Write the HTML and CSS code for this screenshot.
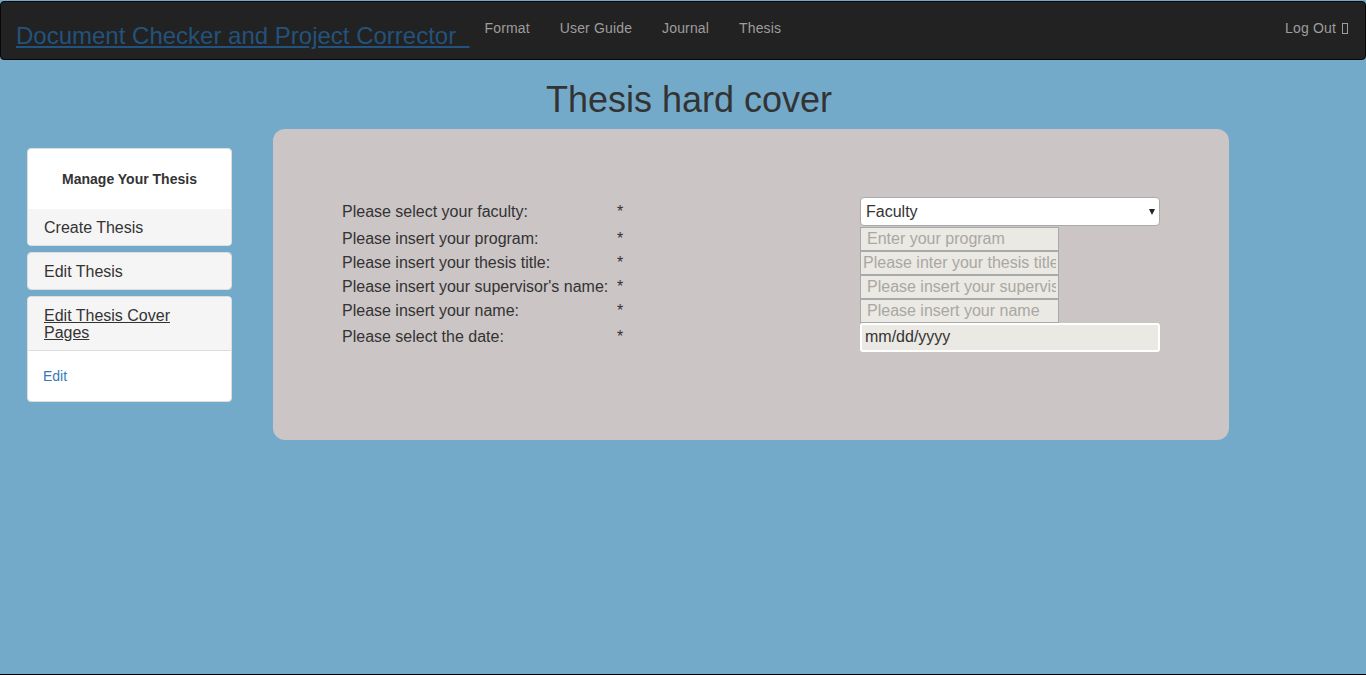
FILE: index.html
```html
<!DOCTYPE html>
<html>
<head>
<meta charset="utf-8">
<title>Thesis hard cover</title>
<link rel="stylesheet" href="styles.css">
</head>
<body>
<div class="page">
  <nav class="navbar">
    <a class="brand" href="#">Document Checker and Project Corrector&nbsp;&nbsp;</a>
    <ul class="nav">
      <li><a href="#">Format</a></li>
      <li><a href="#">User Guide</a></li>
      <li><a href="#">Journal</a></li>
      <li><a href="#">Thesis</a></li>
    </ul>
    <a class="logout" href="#">Log Out <span class="tofu"></span></a>
  </nav>

  <h1 class="title">Thesis hard cover</h1>

  <div class="content">
    <aside class="sidebar">
      <div class="panel">
        <div class="panel-top">Manage Your Thesis</div>
        <div class="panel-heading">Create Thesis</div>
      </div>
      <div class="panel">
        <div class="panel-heading">Edit Thesis</div>
      </div>
      <div class="panel">
        <div class="panel-heading bordered"><a class="uline" href="#">Edit Thesis Cover Pages</a></div>
        <div class="panel-body"><a class="link" href="#">Edit</a></div>
      </div>
    </aside>

    <main class="card">
      <form class="form">
        <label class="lbl">Please select your faculty:</label>
        <span class="req">*</span>
        <div class="field">
          <span class="select-wrap">
            <select class="select"><option>Faculty</option></select>
          </span>
        </div>

        <label class="lbl">Please insert your program:</label>
        <span class="req">*</span>
        <div class="field"><input class="txt pad" type="text" placeholder="Enter your program"></div>

        <label class="lbl">Please insert your thesis title:</label>
        <span class="req">*</span>
        <div class="field"><input class="txt" type="text" placeholder="Please inter your thesis title"></div>

        <label class="lbl">Please insert your supervisor's name:</label>
        <span class="req">*</span>
        <div class="field"><input class="txt pad" type="text" placeholder="Please insert your supervisor's name"></div>

        <label class="lbl">Please insert your name:</label>
        <span class="req">*</span>
        <div class="field"><input class="txt pad" type="text" placeholder="Please insert your name"></div>

        <label class="lbl">Please select the date:</label>
        <span class="req">*</span>
        <div class="field"><input class="date" type="text" value="mm/dd/yyyy" readonly></div>
      </form>
    </main>
  </div>
</div>
</body>
</html>
```

FILE: styles.css
```css
* { box-sizing: border-box; }

html, body {
  margin: 0;
  padding: 0;
}

body {
  background: #74aac9;
  font-family: "Liberation Sans", Arial, Helvetica, sans-serif;
  font-size: 14px;
  color: #333;
}

.page {
  min-height: 100vh;
  padding-top: 1px;
  border-bottom: 1px solid #000;
}

.navbar {
  display: flex;
  align-items: flex-start;
  height: 59px;
  background: #222;
  border: 1px solid #080808;
  border-radius: 4px;
}

.brand {
  font-size: 24px;
  line-height: 28px;
  color: #23527c;
  text-decoration: underline;
  padding: 20px 0 0 15px;
  margin-right: 1px;
}

.nav {
  display: flex;
  list-style: none;
  margin: 0;
  padding: 0;
}

.nav a,
.logout {
  display: block;
  padding: 16px 15px 14px;
  line-height: 20px;
  font-size: 14px;
  letter-spacing: 0.15px;
  color: #9d9d9d;
  text-decoration: none;
}

.nav li:first-child a {
  padding-left: 14px;
}

.logout {
  margin-left: auto;
  padding-right: 17px;
}

.tofu {
  display: inline-block;
  width: 6px;
  height: 11px;
  border: 1px solid #9d9d9d;
  vertical-align: -1px;
  margin-left: 2px;
}

.title {
  margin: 20px 0 9px;
  padding-left: 12px;
  text-align: center;
  font-size: 36px;
  font-weight: 500;
  line-height: 1.1;
  color: #333;
}

.content {
  display: flex;
  align-items: flex-start;
}

.sidebar {
  width: 205px;
  margin-left: 27px;
  margin-top: 19px;
}

.panel {
  background: #fff;
  border: 1px solid #ddd;
  border-radius: 4px;
  margin-bottom: 6px;
  overflow: hidden;
}

.panel-top {
  height: 60px;
  display: flex;
  align-items: center;
  justify-content: center;
  font-weight: bold;
  font-size: 14px;
  padding-top: 1px;
}

.panel-heading {
  background: #f5f5f5;
  padding: 10px 15px 9px 16px;
  font-size: 16px;
  line-height: 17px;
  color: #333;
}

.panel-heading.bordered {
  border-bottom: 1px solid #ddd;
}

.uline {
  color: #333;
  text-decoration: underline;
}

.panel-body {
  padding: 15px 15px 15px 15px;
  line-height: 20px;
}

.link {
  color: #337ab7;
  text-decoration: none;
  font-size: 14px;
}

.card {
  width: 956px;
  height: 311px;
  margin-left: 41px;
  background: #cbc5c5;
  border-radius: 12px;
  padding: 68px 0 0 69px;
}

.form {
  display: grid;
  grid-template-columns: 275px 243px 300px;
  align-items: center;
  font-size: 16px;
}

.lbl {
  color: #333;
  line-height: 18px;
}

.req {
  color: #333;
  line-height: 18px;
}

.field {
  display: flex;
}

.select-wrap {
  position: relative;
  display: block;
  width: 300px;
  margin-bottom: 1px;
}

.select-wrap::after {
  content: "";
  position: absolute;
  right: 5px;
  top: 12px;
  border-left: 3.5px solid transparent;
  border-right: 3.5px solid transparent;
  border-top: 6px solid #222;
}

.select {
  -webkit-appearance: none;
  appearance: none;
  width: 300px;
  height: 29px;
  background: #fff;
  border: 1px solid #aaa;
  border-radius: 4px;
  padding: 0 20px 0 5px;
  font-family: inherit;
  font-size: 16px;
  color: #333;
}

.txt {
  width: 199px;
  height: 24px;
  background: #ebe9e3;
  border: 1px solid #a9a9a9;
  border-radius: 0;
  padding: 0 2px;
  font-family: inherit;
  font-size: 16px;
  color: #333;
}

.txt.pad {
  padding-left: 6px;
}

.txt::placeholder {
  color: #a9a7a3;
  opacity: 1;
}

.date {
  width: 300px;
  height: 29px;
  background: #ebe9e3;
  border: 2px solid #fff;
  border-radius: 3px;
  padding: 0 3px;
  font-family: inherit;
  font-size: 16px;
  color: #333;
}
```
